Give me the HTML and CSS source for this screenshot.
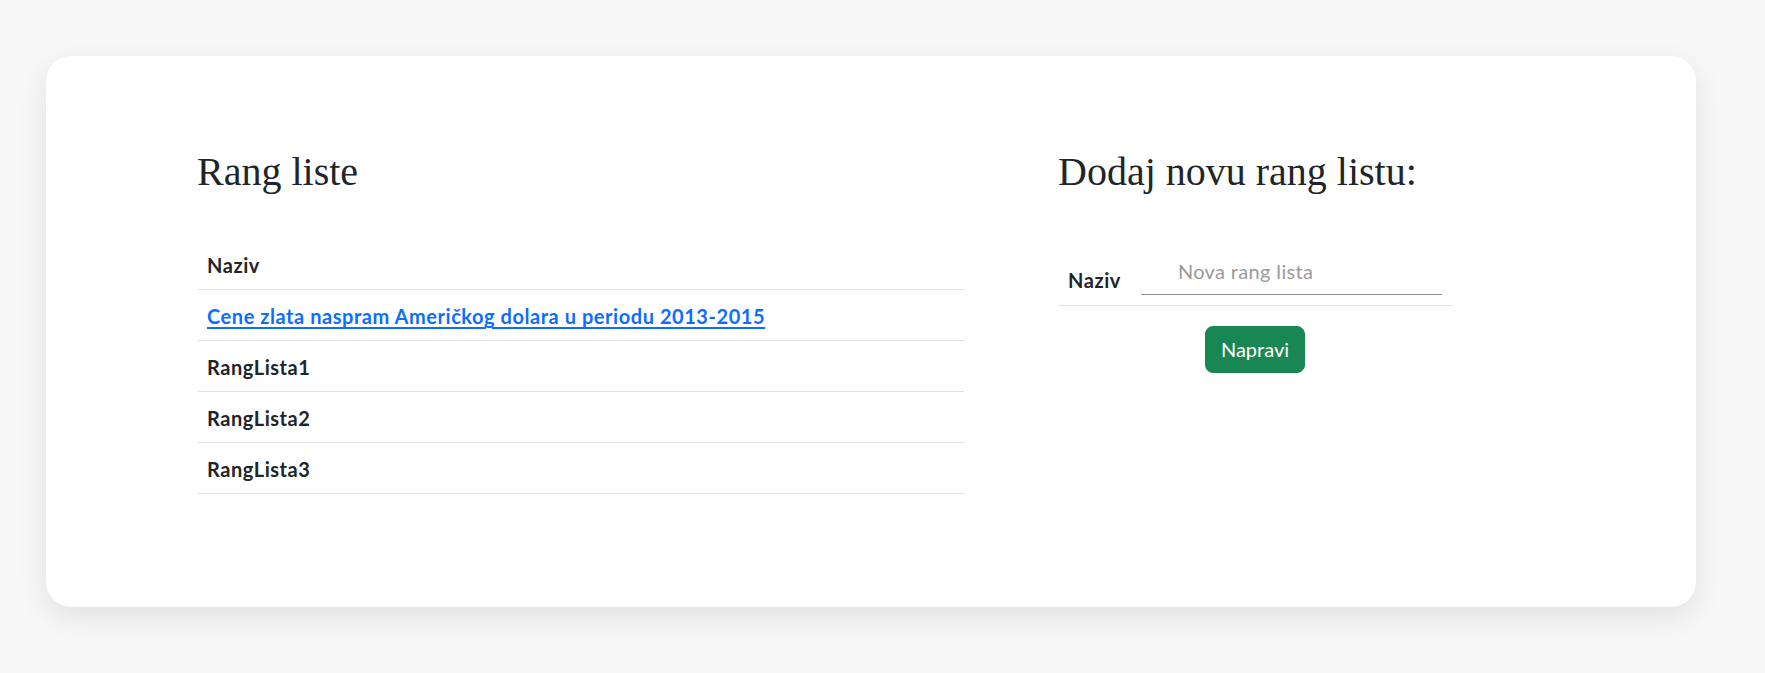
FILE: index.html
```html
<!DOCTYPE html>
<html lang="sr">
<head>
<meta charset="utf-8">
<title>Rang liste</title>
<link rel="stylesheet" href="styles.css">
</head>
<body>
<div class="page">
  <main class="card">
    <section class="col-list">
      <h1 class="title">Rang liste</h1>
      <table class="list-table">
        <thead>
          <tr><th>Naziv</th></tr>
        </thead>
        <tbody>
          <tr><td><a href="#" class="list-link">Cene zlata naspram Američkog dolara u periodu 2013-2015</a></td></tr>
          <tr><td>RangLista1</td></tr>
          <tr><td>RangLista2</td></tr>
          <tr><td>RangLista3</td></tr>
        </tbody>
      </table>
    </section>
    <section class="col-form">
      <h1 class="title">Dodaj novu rang listu:</h1>
      <form class="new-form" onsubmit="return false;">
        <div class="form-row">
          <label class="form-label" for="naziv">Naziv</label>
          <input class="form-input" id="naziv" type="text" placeholder="Nova rang lista">
        </div>
        <div class="form-actions">
          <button class="btn-create" type="submit">Napravi</button>
        </div>
      </form>
    </section>
  </main>
</div>
</body>
</html>
```
FILE: styles.css
```css
* { box-sizing: border-box; }

html, body {
  margin: 0;
  padding: 0;
  background: #f7f7f7;
}

body {
  font-family: Lato, "Liberation Sans", sans-serif;
  font-size: 20px;
  color: #212529;
}

.page {
  padding: 56px 69px 66px 46px;
}

.card {
  background: #ffffff;
  border-radius: 25px;
  box-shadow: 0 10px 30px rgba(0, 0, 0, 0.09);
  height: 551px;
  padding: 92px 0 0 151px;
  display: flex;
  gap: 94px;
  align-items: flex-start;
}

.title {
  font-family: "Liberation Serif", "Times New Roman", serif;
  font-weight: 400;
  font-size: 40px;
  line-height: 48px;
  margin: 0;
  color: #212529;
}

.col-list {
  width: 767px;
}

.list-table {
  width: 100%;
  margin-top: 43px;
  border-collapse: collapse;
}

.list-table th,
.list-table td {
  text-align: left;
  font-weight: 700;
  font-size: 20px;
  line-height: 30px;
  letter-spacing: 0.55px;
  padding: 11px 10px 9px;
  border-bottom: 1px solid #dee2e6;
}

.list-link {
  color: #0d6efd;
  text-decoration: underline;
  text-underline-offset: 3px;
}

.col-form {
  width: 394px;
}

.new-form {
  margin-top: 60px;
}

.form-row {
  display: flex;
  align-items: flex-end;
  padding: 0 10px 10px 10px;
  border-bottom: 1px solid #dee2e6;
}

.form-label {
  font-weight: 700;
  line-height: 30px;
  letter-spacing: 0.55px;
  margin-right: 20px;
}

.form-input {
  flex: 1;
  font-family: Lato, "Liberation Sans", sans-serif;
  font-size: 20px;
  line-height: 30px;
  letter-spacing: 0.35px;
  padding: 0 0 8px 37px;
  border: none;
  border-bottom: 1px solid #8f8f8f;
  background: transparent;
  color: #212529;
  outline: none;
}

.form-input::placeholder {
  color: #9a9a9a;
}

.form-actions {
  display: flex;
  justify-content: center;
  margin-top: 20px;
}

.btn-create {
  font-family: Lato, "Liberation Sans", sans-serif;
  font-size: 20px;
  line-height: 30px;
  padding: 7px 15px 8px;
  color: #ffffff;
  background: #198754;
  border: 1px solid #198754;
  border-radius: 8px;
  cursor: pointer;
}
```
